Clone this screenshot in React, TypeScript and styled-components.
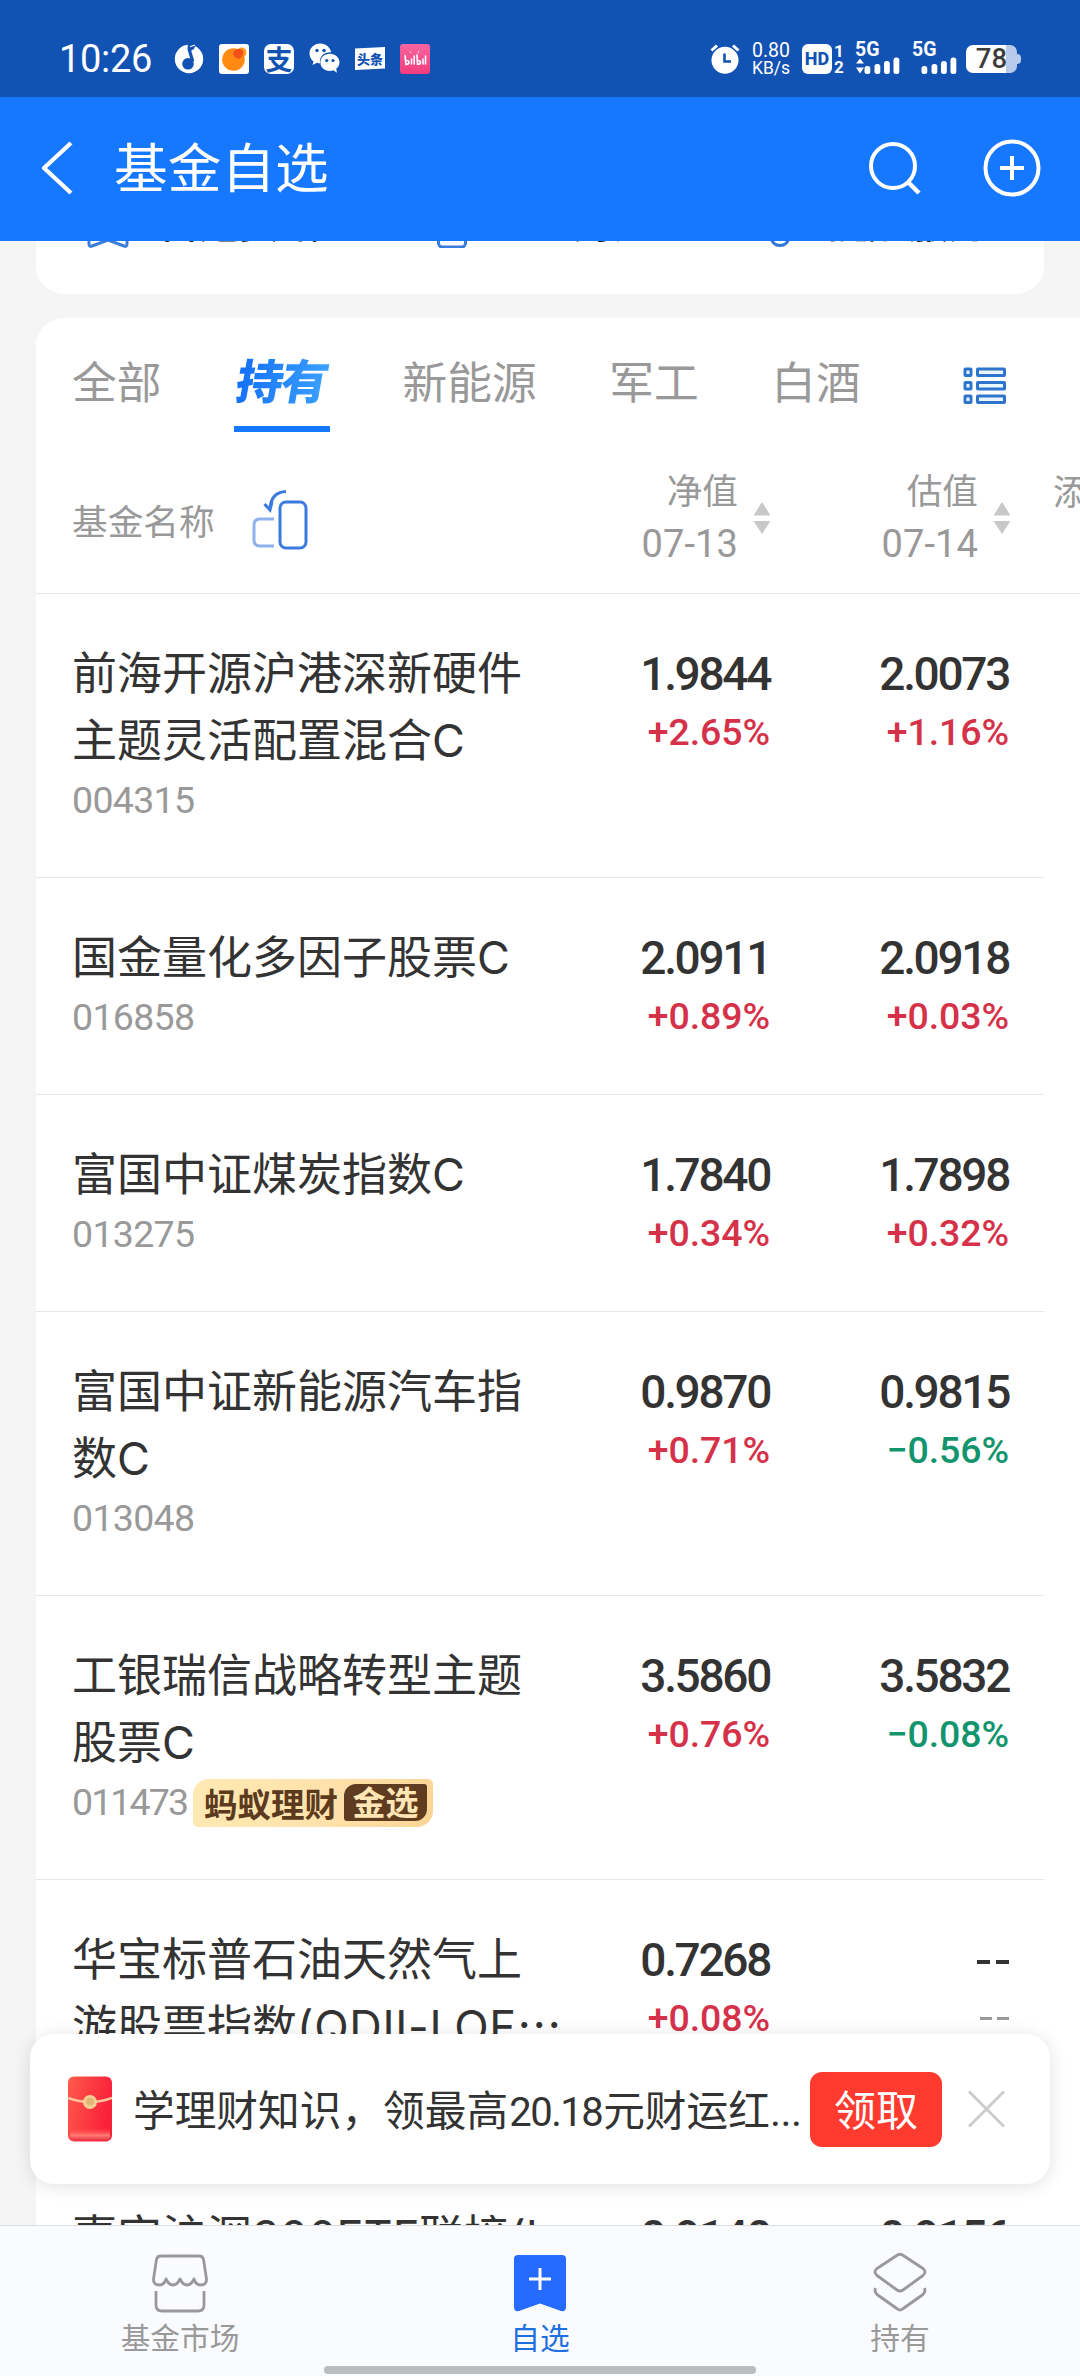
import React from "react";
import styled, { createGlobalStyle } from "styled-components";

const cjk = `"Noto Sans CJK SC", "Noto Sans", sans-serif`;
const latin = `Roboto, "Noto Sans CJK SC", sans-serif`;
const mixed = `Inter, "Noto Sans CJK SC", sans-serif`;

const GlobalStyle = createGlobalStyle`
  * { box-sizing: border-box; }
  body { margin: 0; background: #f5f5f5; }
  svg { display: block; flex: none; }
`;

const Page = styled.div`
  position: relative;
  display: flex;
  flex-direction: column;
  width: 1080px;
  height: 2376px;
  overflow: hidden;
  background: #f5f5f5;
  font-family: ${cjk};
  color: #333;
`;

/* ---------- status bar ---------- */

const StatusBar = styled.div`
  flex: none;
  display: flex;
  align-items: center;
  justify-content: space-between;
  height: 97px;
  padding: 20px 59px 0 59px;
  background: #1152b2;
  color: #fff;
`;

const StatusGroup = styled.div<{ $gap: number }>`
  display: flex;
  align-items: center;
  gap: ${(p) => p.$gap}px;
`;

const Clock = styled.span`
  width: 115px;
  margin-right: -15px;
  font: 400 38px/40px ${latin};
  letter-spacing: -0.3px;
`;

const AppTile = styled.span<{ $bg: string }>`
  display: flex;
  align-items: center;
  justify-content: center;
  width: 30px;
  height: 30px;
  border-radius: 3px;
  background: ${(p) => p.$bg};
`;

const AlipayTile = styled(AppTile)`
  border-radius: 7px;
  color: #1152b2;
  font: 700 27px/30px ${cjk};
`;

const NewsTile = styled.span`
  display: flex;
  align-items: center;
  justify-content: center;
  width: 30px;
  height: 23px;
  clip-path: polygon(0 6%, 100% 0, 100% 94%, 0 100%);
  background: #fff;
  color: #1152b2;
  font: 900 13px/22px ${cjk};
`;

const NetSpeed = styled.span`
  display: flex;
  flex-direction: column;
  align-items: center;
  width: 40px;
  margin-right: 11px;
  margin-left: 11px;
  font: 400 19.5px/18px ${latin};
  small { font-size: 17.5px; line-height: 16px; }
`;

const HdBadge = styled.span`
  display: flex;
  align-items: center;
  justify-content: center;
  width: 30px;
  height: 30px;
  border-radius: 6px;
  background: #fff;
  color: #1152b2;
  font: 800 18px/30px ${latin};
`;

const SimDigits = styled.span`
  display: flex;
  flex-direction: column;
  align-items: center;
  width: 12px;
  margin: 0 10px 0 1px;
  font: 700 17px/16px ${latin};
`;

const Signal = styled.span`
  display: flex;
  flex-direction: column;
  width: 45px;
  height: 31px;
  margin-right: 12px;
  font: 700 19.5px/14px ${latin};
`;

const LastSignal = styled(Signal)`
  margin-right: 9px;
`;

const Battery = styled.span`
  display: flex;
  align-items: center;
`;

const BatteryCell = styled.span`
  display: flex;
  align-items: center;
  justify-content: center;
  width: 51px;
  height: 28px;
  border-radius: 7px;
  background: linear-gradient(90deg, #fff 78%, #b9cbea 78%);
  color: #3c3c3c;
  font: 500 27.5px/28px ${latin};
`;

const BatteryTip = styled.span`
  width: 4px;
  height: 10px;
  border-radius: 0 4px 4px 0;
  background: #b9cbea;
`;

/* ---------- title bar ---------- */

const TitleBar = styled.header`
  flex: none;
  display: flex;
  align-items: center;
  height: 144px;
  padding: 0 39px 2px 40px;
  background: #1677ff;
  color: #fff;
`;

const Title = styled.h1`
  flex: 1;
  margin: 0 0 7px 40px;
  font: 400 53.7px/72px ${cjk};
`;

const TitleActions = styled.div`
  display: flex;
  align-items: center;
  gap: 62px;
`;

/* ---------- scrolled content ---------- */

const Content = styled.main`
  flex: 1;
  min-height: 0;
  overflow: hidden;
`;

const ShortcutCard = styled.section`
  display: flex;
  height: 150px;
  margin: -97px 36px 24px;
  padding: 50px 0 0 50px;
  border-radius: 0 0 28px 28px;
  background: #fff;
`;

const Shortcut = styled.div<{ $width: number; $gap: number }>`
  display: flex;
  align-items: flex-start;
  gap: ${(p) => p.$gap}px;
  width: ${(p) => p.$width}px;
  font: 500 40px/54px ${cjk};
  color: #222;
`;

const ListCard = styled.section`
  margin-left: 36px;
  border-radius: 28px 0 0 0;
  background: #fff;
`;

const Tabs = styled.nav`
  display: flex;
  align-items: flex-start;
  gap: 72.600px;
  height: 128px;
  padding: 28px 0 0 36px;
  svg { margin: 21px 0 0 30px; }
`;

const Tab = styled.span`
  flex: none;
  font: 400 44.7px/68px ${cjk};
  color: #999;
`;

const ActiveTab = styled.span`
  display: flex;
  flex: none;
  flex-direction: column;
  align-items: center;
  height: 86px;
  width: 96px;
  border-bottom: 6px solid #1677ff;
`;

const ActiveTabText = styled.span`
  padding: 0 5px;
  background: linear-gradient(90deg, #1672f8 10%, #3aa0ff 95%);
  background-clip: text;
  -webkit-background-clip: text;
  color: transparent;
  font: 900 47px/66px ${cjk};
  letter-spacing: -2px;
  white-space: nowrap;
  transform: skewX(-10deg);
`;

const ColumnHead = styled.div`
  display: flex;
  align-items: flex-start;
  height: 148px;
  padding: 22px 0 0 36px;
  border-bottom: 1px solid #e8e8e8;
  overflow: hidden;
  color: #999;
`;

const NameHead = styled.div`
  display: flex;
  flex: none;
  align-items: center;
  gap: 36px;
  width: 459px;
  height: 104px;
  font: 400 35.7px/54px ${cjk};
`;

const SortHead = styled.div`
  display: flex;
  flex: none;
  align-items: center;
  justify-content: flex-end;
  gap: 15px;
  width: 240px;
  height: 110px;
  margin-top: -5px;
`;

const SortLabel = styled.span`
  display: flex;
  flex-direction: column;
  align-items: flex-end;
  font: 400 35.7px/52px ${cjk};
`;

const SortDate = styled.span`
  font: 400 38px/58px ${latin};
  letter-spacing: 0.1px;
`;

const ClippedHead = styled.span`
  flex: none;
  margin: -4px 0 0 42px;
  font: 400 35.7px/52px ${cjk};
`;

const Row = styled.article<{ $height?: number }>`
  display: flex;
  align-items: flex-start;
  width: 1008px;
  height: ${(p) => (p.$height ? `${p.$height}px` : "auto")};
  padding: 46px 35px 50px 36px;
  border-bottom: 1px solid #e8e8e8;
`;

const FundInfo = styled.div`
  flex: none;
  width: 490px;
`;

const FundName = styled.div`
  font: 400 45px/67px ${mixed};
  white-space: pre;
`;

const NameTail = styled.span`
  letter-spacing: 0.7px;
`;

const Ellipsis = styled.span`
  font-family: ${cjk};
  line-height: 1;
`;

const FundMeta = styled.div`
  display: flex;
  align-items: center;
  gap: 5px;
  height: 53px;
`;

const FundCode = styled.span<{ $tight?: boolean }>`
  font: 400 37.5px/53px ${latin};
  letter-spacing: ${(p) => (p.$tight ? -1.9 : -0.7)}px;
  color: #999;
`;

const Badge = styled.span`
  display: flex;
  align-items: center;
  gap: 6px;
  width: 240px;
  height: 48px;
  margin-left: 1px;
  padding-left: 11px;
  border-radius: 16px 5px 16px 5px;
  background: linear-gradient(100deg, #ffe9b2, #ffe2ab 55%, #fbd596);
  color: #5c3a1e;
  font: 700 33.5px/44px ${cjk};
`;

const BadgeInset = styled.span`
  display: flex;
  justify-content: center;
  width: 83px;
  height: 37px;
  border-radius: 12px 3px 12px 3px;
  background: #5f3c20;
  color: #ffe6b4;
  font: 700 33px/35px ${cjk};
`;

const Quote = styled.div<{ $width: number }>`
  display: flex;
  flex-direction: column;
  align-items: flex-end;
  width: ${(p) => p.$width}px;
`;

const Price = styled.span`
  font: 500 46px/68px ${latin};
  letter-spacing: -2.3px;
`;

const toneColor = { up: "#d5324a", down: "#12946c", flat: "#999" };

const Change = styled.span<{ $tone: keyof typeof toneColor }>`
  font: 500 37.5px/48px ${latin};
  letter-spacing: -0.1px;
  color: ${(p) => toneColor[p.$tone]};
`;

const Dashes = styled.span<{ $muted?: boolean }>`
  display: flex;
  justify-content: flex-end;
  align-items: center;
  gap: ${(p) => (p.$muted ? 5 : 6)}px;
  height: ${(p) => (p.$muted ? 48 : 68)}px;
  padding-top: ${(p) => (p.$muted ? 0 : 3)}px;
  i {
    width: ${(p) => (p.$muted ? 12 : 13)}px;
    height: ${(p) => (p.$muted ? 3 : 4)}px;
    background: ${(p) => (p.$muted ? "#999" : "#333")};
  }
`;

/* ---------- floating promo ---------- */

const Promo = styled.aside`
  position: absolute;
  left: 30px;
  top: 2034px;
  display: flex;
  align-items: center;
  width: 1020px;
  height: 150px;
  padding: 0 45px 0 38px;
  border-radius: 24px;
  background: #fff;
  box-shadow: 0 2px 18px rgba(0, 0, 0, 0.12);
`;

const PromoText = styled.span`
  flex: 1;
  margin: 2px 0 0 21px;
  font: 400 41.7px/60px ${cjk};
  white-space: nowrap;
`;

const PromoAmount = styled.span`
  margin: 0 1px;
  font-family: ${latin};
  font-size: 40px;
  letter-spacing: -1.5px;
`;

const PromoDots = styled.span`
  font-family: ${latin};
  letter-spacing: -0.5px;
`;

const ClaimButton = styled.button`
  width: 132px;
  height: 75px;
  margin-right: 26px;
  padding: 0 0 3px;
  border: 0;
  border-radius: 12px;
  background: #ff3b30;
  color: #fff;
  font: 400 42px/70px ${cjk};
`;

/* ---------- bottom navigation ---------- */

const BottomNav = styled.nav`
  flex: none;
  display: flex;
  flex-direction: column;
  align-items: center;
  height: 151px;
  border-top: 1px solid #dcdde0;
  background: #fafbff;
`;

const NavItems = styled.div`
  display: grid;
  grid-template-columns: repeat(3, 360px);
  height: 140px;
`;

const NavItem = styled.div<{ $active?: boolean }>`
  display: flex;
  flex-direction: column;
  align-items: center;
  padding-top: 25px;
  color: ${(p) => (p.$active ? "#1f6fe0" : "#999")};
  font: 400 29.7px/44px ${cjk};
`;

const HomeIndicator = styled.div`
  width: 432px;
  height: 8px;
  border-radius: 4px;
  background: #bcbdc0;
`;

/* ---------- icons ---------- */

const MusicIcon = () => (
  <svg width="30" height="31" viewBox="0 0 30 31">
    <circle cx="15" cy="16" r="14.200" fill="#fff" />
    <path d="M14 1 H22 L20 6 L16.500 8 L13.500 6Z" fill="#1152b2" />
    <path d="M15 6 L18.800 18.500" stroke="#1152b2" strokeWidth="3.200" />
    <circle cx="14" cy="20.800" r="5.800" fill="#1152b2" />
    <path d="M16 3.800 L21 2" stroke="#fff" strokeWidth="1.200" />
  </svg>
);

const OrangeIcon = () => (
  <svg width="26" height="26" viewBox="0 0 26 26">
    <circle cx="20.5" cy="6.5" r="5" fill="#ff9a1f" />
    <circle cx="12.5" cy="13.5" r="11.3" fill="#ff8a12" />
    <path d="M12 6.5 C14 2.5 19 2 22 4.5 C23 8 21 12.5 17.5 12.8 C14 12 12 9.500 12 6.500Z" fill="#f4511a" />
  </svg>
);

const WechatIcon = () => (
  <svg width="31" height="31" viewBox="0 0 31 31">
    <path d="M11.500 0.500 C5 0.500 0.500 5 0.500 10.500 C0.500 14 2.200 16.600 4.500 18.400 L3.500 22 L8 19.800 L11 20.400 C10 13.500 15 9 22.200 9.300 C21 4 16.800 0.500 11.500 0.500Z" fill="#fff" />
    <path d="M20.800 10.800 C15.200 10.800 11.400 14.700 11.400 19.500 C11.400 24.400 15.500 28 20.600 28 C22 28 23.200 27.700 24.300 27.300 L28 29.700 L27.200 25.700 C29.200 24.200 30.500 22 30.500 19.500 C30.500 14.700 26.300 10.800 20.800 10.800Z" fill="#fff" />
    <circle cx="8" cy="7.500" r="1.700" fill="#1152b2" />
    <circle cx="15" cy="7.500" r="1.700" fill="#1152b2" />
    <circle cx="17.700" cy="17.500" r="1.600" fill="#1152b2" />
    <circle cx="24" cy="17.500" r="1.600" fill="#1152b2" />
  </svg>
);

const BiliIcon = () => (
  <svg width="26" height="26" viewBox="0 0 26 26" fill="none" stroke="#fff" strokeWidth="1.600" strokeLinecap="round">
    <path d="M8 5.500 L9 7 M17 5 L16 7" strokeWidth="1" opacity="0.7" />
    <path d="M3 9.500 L4 18.500 C8 18.500 8 14 4 14.500 M9.500 13 V18 M12.200 10 V18 M15 9 L15.500 18.300 C19.500 18.300 19.500 14 15.500 14.500 M21 13 V18 M23.500 10 V18" />
  </svg>
);

const AlarmIcon = () => (
  <svg width="30" height="31" viewBox="0 0 30 31">
    <circle cx="15" cy="17.300" r="13.500" fill="#fff" />
    <path d="M1.500 7.500 L7 2.500 M28.500 7.500 L23 2.500" stroke="#fff" strokeWidth="3" />
    <path d="M14.500 10.500 V18.500 H21" fill="none" stroke="#1152b2" strokeWidth="2.600" />
  </svg>
);

const SignalBars = ({ arrows }: { arrows?: boolean }) => (
  <svg width="45" height="17" viewBox="0 0 45 17" fill="#fff">
    {arrows && <path d="M5 1.500 L9 6.500 H1Z M5 16.500 L9 10.500 H1Z" />}
    <rect x="9.500" y="9" width="5.800" height="8" rx="2.500" />
    <rect x="19.500" y="7" width="5.800" height="10" rx="2.500" />
    <rect x="29" y="4" width="5.800" height="13" rx="2.500" />
    <rect x="38.500" y="0.500" width="5.800" height="16.500" rx="2.500" />
  </svg>
);

const BackIcon = () => (
  <svg width="34" height="54" viewBox="0 0 34 54" fill="none" stroke="#fff" strokeWidth="4.200">
    <path d="M31 2 L4 27 L31 52" strokeLinejoin="round" />
  </svg>
);

const SearchIcon = () => (
  <svg width="52" height="54" viewBox="0 0 52 54" fill="none" stroke="#fff" strokeWidth="4">
    <circle cx="24" cy="25" r="22" />
    <path d="M39 41 L50 52" strokeWidth="4.500" />
  </svg>
);

const AddIcon = () => (
  <svg width="58" height="58" viewBox="0 0 58 58" fill="none" stroke="#fff" strokeWidth="4">
    <circle cx="29" cy="29" r="26.500" />
    <path d="M29 17 V41 M17 29 H41" />
  </svg>
);

const BookmarkOutline = () => (
  <svg width="44" height="54" viewBox="0 0 44 54" fill="none" stroke="#3b7ddd" strokeWidth="3">
    <path d="M3 6 H41 V50 Q41 53 38 52 L22 46 L6 52 Q3 53 3 50 Z" />
  </svg>
);

const SheetOutline = () => (
  <svg width="30" height="54" viewBox="0 0 30 54" fill="none" stroke="#3b7ddd" strokeWidth="3">
    <rect x="1.500" y="8" width="27" height="45" rx="4" />
  </svg>
);

const BellOutline = () => (
  <svg width="40" height="54" viewBox="0 0 40 54" fill="none" stroke="#2f76dd" strokeWidth="3">
    <path d="M4 40 H36 M8 40 V22 a12 12 0 0 1 24 0 V40 M11.500 44 a8.500 7.500 0 0 0 17 0" />
  </svg>
);

const ListIcon = () => (
  <svg width="44" height="38" viewBox="0 0 44 38" fill="#e9f6ff" stroke="#2f74cc" strokeWidth="3">
    {[2, 15.500, 29].map((y) => (
      <g key={y}>
        <rect x="2" y={y} width="6" height="6.500" rx="0.500" />
        <rect x="14.500" y={y} width="27" height="6.500" rx="0.500" />
      </g>
    ))}
  </svg>
);

const RotateIcon = () => (
  <svg width="58" height="62" viewBox="0 0 58 62" fill="none" strokeWidth="3">
    <path d="M23 30 H9 Q3 30 3 36 V51 Q3 57 9 57 H23" stroke="#8db2ee" />
    <rect x="29" y="13" width="26" height="46" rx="6" stroke="#3b7be0" />
    <path d="M35 2.500 Q20 3 19 20 M13.500 15 L19 21 L21 13" stroke="#3b7be0" />
  </svg>
);

const SortIcon = () => (
  <svg width="18" height="32" viewBox="0 0 18 32" fill="#c8c8c8">
    <path d="M9 0 L17.500 13.500 H0.500Z M9 32 L17.500 19 H0.500Z" />
  </svg>
);

const EnvelopeIcon = () => (
  <svg width="44" height="66" viewBox="0 0 44 66">
    <defs>
      <linearGradient id="packet" x1="0" y1="0" x2="1" y2="0.300">
        <stop offset="0" stopColor="#ff5b4a" />
        <stop offset="1" stopColor="#f9203a" />
      </linearGradient>
      <linearGradient id="packetFoot" x1="0" y1="0" x2="0" y2="1">
        <stop offset="0" stopColor="#ff4b4b" stopOpacity="0" />
        <stop offset="0.600" stopColor="#ff7a70" />
        <stop offset="1" stopColor="#e92f45" />
      </linearGradient>
    </defs>
    <rect x="0" y="0.500" width="44" height="65" rx="6" fill="url(#packet)" />
    <path d="M2 52 H42 V60 Q42 64.500 37 64.500 H7 Q2 64.500 2 60Z" fill="url(#packetFoot)" />
    <path d="M0 22 Q22 30 44 22" fill="none" stroke="#ffc49a" strokeWidth="2.500" />
    <circle cx="22" cy="26" r="7" fill="#f3cf95" />
    <circle cx="22" cy="25.500" r="4" fill="#e4b673" />
  </svg>
);

const CloseIcon = () => (
  <svg width="37" height="38" viewBox="0 0 37 38" fill="none" stroke="#ccc" strokeWidth="3">
    <path d="M1 1.500 L36 36.500 M36 1.500 L1 36.500" />
  </svg>
);

const MarketIcon = () => (
  <svg width="58" height="64" viewBox="0 0 58 64" fill="none" stroke="#999" strokeWidth="2.800" strokeLinejoin="round">
    <path d="M10 5 H48 Q52 5 52.600 9 L55.500 28 Q56 34 49.500 34 Q45 34 43 28 Q40 34 36 34 Q32 34 29 28 Q26 34 22 34 Q18 34 15 28 Q13 34 8.500 34 Q2 34 2.500 28 L5.400 9 Q6 5 10 5Z" />
    <path d="M5 40 V54 Q5 60 11 60 H47 Q53 60 53 54 V40" />
  </svg>
);

const BookmarkAddIcon = () => (
  <svg width="54" height="64" viewBox="0 0 54 64">
    <path d="M1 8 Q1 4 5 4 H49 Q53 4 53 8 V56 Q53 61 48 60 L27 52.500 L6 60 Q1 61 1 56Z" fill="#266bff" />
    <path d="M27 17 V39 M16 28 H38" stroke="#fff" strokeWidth="3" />
  </svg>
);

const HoldingsIcon = () => (
  <svg width="54" height="64" viewBox="0 0 54 64" fill="none" stroke="#999" strokeWidth="2.800" strokeLinejoin="round">
    <path d="M24.500 4 Q27 2.500 29.500 4 L50 17.500 Q54 21 50 24.500 L30 39 Q27 41 24 39 L4 24.500 Q0 21 4 17.500Z" />
    <path d="M2.500 37 Q1 41 4 43.500 L24.500 58 Q27 60 29.500 58 L50 43.500 Q53 41 51.500 37" />
  </svg>
);

/* ---------- data ---------- */

type Tone = "up" | "down";
type Fund = {
  name: string;
  tail?: string;
  code: string;
  net: [string, string, Tone];
  est?: [string, string, Tone];
  picked?: boolean;
  height?: number;
};

const funds: Fund[] = [
  { name: "前海开源沪港深新硬件\n主题灵活配置混合C", code: "004315", net: ["1.9844", "+2.65%", "up"], est: ["2.0073", "+1.16%", "up"] },
  { name: "国金量化多因子股票C", code: "016858", net: ["2.0911", "+0.89%", "up"], est: ["2.0918", "+0.03%", "up"] },
  { name: "富国中证煤炭指数C", code: "013275", net: ["1.7840", "+0.34%", "up"], est: ["1.7898", "+0.32%", "up"] },
  { name: "富国中证新能源汽车指\n数C", code: "013048", net: ["0.9870", "+0.71%", "up"], est: ["0.9815", "−0.56%", "down"] },
  { name: "工银瑞信战略转型主题\n股票C", code: "011473", net: ["3.5860", "+0.76%", "up"], est: ["3.5832", "−0.08%", "down"], picked: true },
  { name: "华宝标普石油天然气上\n游股票指数", tail: "(QDII-LOF", code: "007844", net: ["0.7268", "+0.08%", "up"], height: 277 },
  { name: "嘉实沪深300ETF联接(L", code: "160706", net: ["0.9140", "+0.10%", "up"], est: ["0.9156", "+0.17%", "up"] },
];

const FundRow = ({ fund }: { fund: Fund }) => (
  <Row $height={fund.height}>
    <FundInfo>
      <FundName>
        {fund.name}
        {fund.tail && (
          <>
            <NameTail>{fund.tail}</NameTail>
            <Ellipsis lang="zh-CN">…</Ellipsis>
          </>
        )}
      </FundName>
      <FundMeta>
        <FundCode $tight={fund.picked}>{fund.code}</FundCode>
        {fund.picked && (
          <Badge>
            蚂蚁理财<BadgeInset>金选</BadgeInset>
          </Badge>
        )}
      </FundMeta>
    </FundInfo>
    <Quote $width={208}>
      <Price>{fund.net[0]}</Price>
      <Change $tone={fund.net[2]}>{fund.net[1]}</Change>
    </Quote>
    <Quote $width={239}>
      {fund.est ? (
        <>
          <Price>{fund.est[0]}</Price>
          <Change $tone={fund.est[2]}>{fund.est[1]}</Change>
        </>
      ) : (
        <>
          <Dashes><i /><i /></Dashes>
          <Dashes $muted><i /><i /></Dashes>
        </>
      )}
    </Quote>
  </Row>
);

export default function App() {
  return (
    <Page>
      <GlobalStyle />
      <StatusBar>
        <StatusGroup $gap={15}>
          <Clock>10:26</Clock>
          <MusicIcon />
          <AppTile $bg="#fff"><OrangeIcon /></AppTile>
          <AlipayTile $bg="#fff">支</AlipayTile>
          <WechatIcon />
          <NewsTile>头条</NewsTile>
          <AppTile $bg="linear-gradient(#f765a0, #f23d7c)"><BiliIcon /></AppTile>
        </StatusGroup>
        <StatusGroup $gap={0}>
          <AlarmIcon />
          <NetSpeed>0.80<small>KB/s</small></NetSpeed>
          <HdBadge>HD</HdBadge>
          <SimDigits><span>1</span><span>2</span></SimDigits>
          <Signal>5G<SignalBars arrows /></Signal>
          <LastSignal>5G<SignalBars /></LastSignal>
          <Battery><BatteryCell>78</BatteryCell><BatteryTip /></Battery>
        </StatusGroup>
      </StatusBar>

      <TitleBar>
        <BackIcon />
        <Title>基金自选</Title>
        <TitleActions><SearchIcon /><AddIcon /></TitleActions>
      </TitleBar>

      <Content>
        <ShortcutCard>
          <Shortcut $width={351} $gap={29}><BookmarkOutline /><span>自选资讯</span></Shortcut>
          <Shortcut $width={323} $gap={26}><SheetOutline /><span>基金对比</span></Shortcut>
          <Shortcut $width={240} $gap={28}><BellOutline /><span>提醒服务</span></Shortcut>
        </ShortcutCard>

        <ListCard>
          <Tabs>
            <Tab>全部</Tab>
            <ActiveTab><ActiveTabText>持有</ActiveTabText></ActiveTab>
            <Tab>新能源</Tab>
            <Tab>军工</Tab>
            <Tab>白酒</Tab>
            <ListIcon />
          </Tabs>
          <ColumnHead>
            <NameHead>基金名称<RotateIcon /></NameHead>
            <SortHead>
              <SortLabel><span>净值</span><SortDate>07-13</SortDate></SortLabel>
              <SortIcon />
            </SortHead>
            <SortHead>
              <SortLabel><span>估值</span><SortDate>07-14</SortDate></SortLabel>
              <SortIcon />
            </SortHead>
            <ClippedHead>添加</ClippedHead>
          </ColumnHead>
          {funds.map((fund) => <FundRow key={fund.code} fund={fund} />)}
        </ListCard>
      </Content>

      <Promo>
        <EnvelopeIcon />
        <PromoText>
          学理财知识，领最高<PromoAmount>20.18</PromoAmount>元财运红<PromoDots>...</PromoDots>
        </PromoText>
        <ClaimButton>领取</ClaimButton>
        <CloseIcon />
      </Promo>

      <BottomNav>
        <NavItems>
          <NavItem><MarketIcon /><span>基金市场</span></NavItem>
          <NavItem $active><BookmarkAddIcon /><span>自选</span></NavItem>
          <NavItem><HoldingsIcon /><span>持有</span></NavItem>
        </NavItems>
        <HomeIndicator />
      </BottomNav>
    </Page>
  );
}
